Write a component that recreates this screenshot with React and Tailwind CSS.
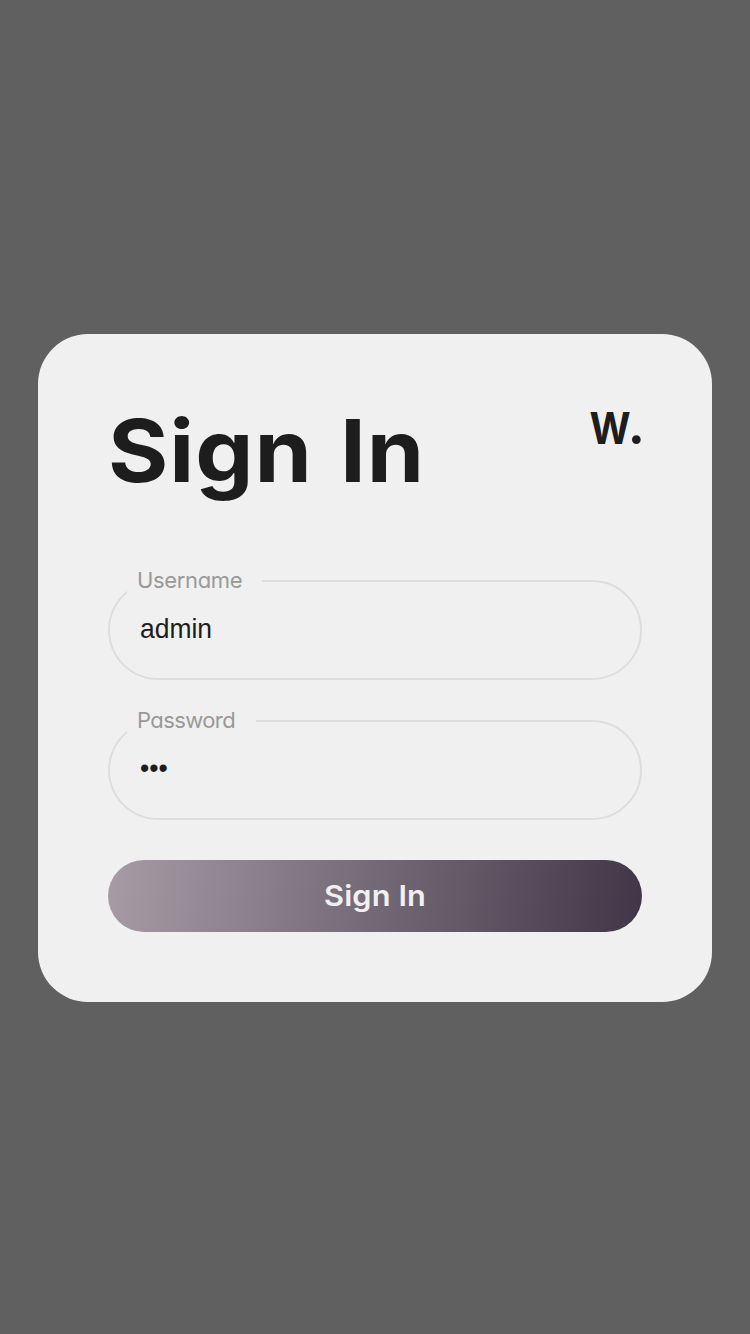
function Field({ label, value, type, notch, tracking, offset }) {
  return (
    <label className="relative flex h-[100px] items-center rounded-[50px] border-2 border-[#dddddd] px-[30px]">
      <span
        className={`absolute left-[17px] -top-[13px] flex h-[25px] items-start whitespace-nowrap bg-[#f0f0f0] pl-[10px] text-[22px] leading-[22px] text-[#999999] [font-feature-settings:'cv11'] ${notch} ${tracking}`}
      >
        {label}
      </span>
      <input
        type={type}
        defaultValue={value}
        className={`h-[40px] w-full origin-left scale-x-[0.945] bg-transparent font-['Liberation_Sans',sans-serif] text-[28px] text-[#1d1d1d] outline-none ${offset}`}
      />
    </label>
  );
}

export default function App() {
  return (
    <main className="flex min-h-screen items-center justify-center bg-[#606060] font-[Inter,sans-serif]">
      <section className="mt-[2px] flex h-[668px] w-[674px] flex-col rounded-[50px] bg-[#f0f0f0] px-[70px] pt-[70px] text-[#1d1d1d]">
        <header className="flex h-[176px] items-start justify-between">
          <h1 className="mt-[3px] origin-left scale-x-[1.06] whitespace-nowrap text-[87px] font-bold leading-[88px] tracking-[0.9px] [word-spacing:4px]">
            Sign In
          </h1>
          <div className="mt-[2px] flex text-[44px] font-bold leading-[44px]">
            <span className="origin-right scale-x-[0.9]">W</span>
            <span className="-ml-px -mr-[2px] origin-[50%_38px] scale-[1.17]">.</span>
          </div>
        </header>
        <form className="flex flex-col" onSubmit={(e) => e.preventDefault()}>
          <div className="flex flex-col gap-[40px]">
            <Field label="Username" value="admin" type="text" notch="w-[135px]" tracking="tracking-[-0.35px]" offset="-mt-[3px]" />
            <Field label="Password" value="123" type="password" notch="w-[129px]" tracking="tracking-[-0.6px]" offset="-mt-[4px]" />
          </div>
          <button className="mt-[40px] h-[72px] rounded-full bg-[linear-gradient(97deg,#a79ca5,#403647)] text-[29px] font-semibold text-[#f0f0f0]">
            <span className="inline-block scale-x-[1.06] tracking-[0.1px]">Sign In</span>
          </button>
        </form>
      </section>
    </main>
  );
}
